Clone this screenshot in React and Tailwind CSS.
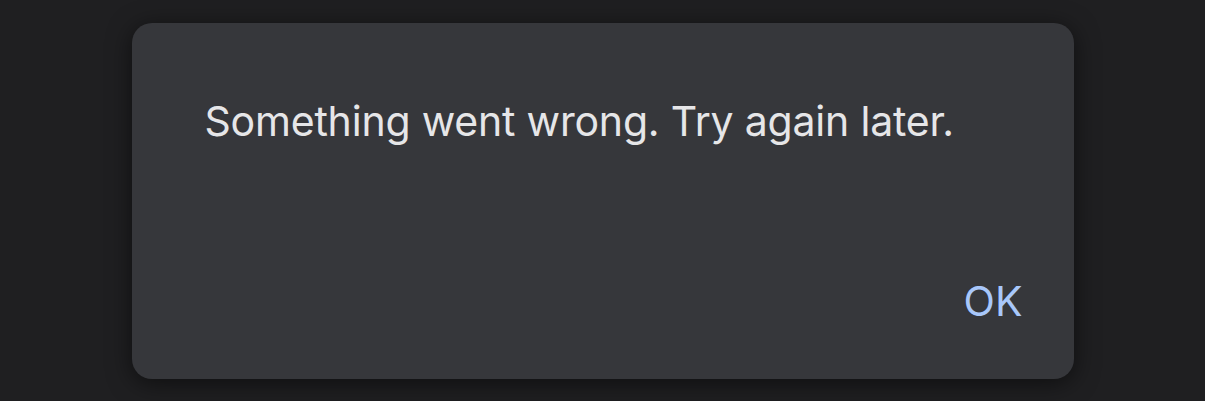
import React from "react";

export default function App() {
  return (
    <div className="w-[1205px] h-[401px] bg-[#1f1f21] pt-[23px] font-['Inter',sans-serif]">
      <div className="mx-auto w-[942px] h-[356px] rounded-[20px] bg-[#36373b] shadow-[0_4px_24px_rgba(0,0,0,0.55)] flex flex-col pl-[73px] pr-[51px] pt-[74px] pb-[54px]">
        <p className="text-[41px] leading-[48px] text-[#e6e6e8] tracking-[-0.2px]">
          Something went wrong. Try again later.
        </p>
        <div className="mt-auto flex justify-end">
          <button className="text-[41px] leading-[48px] text-[#a8c7fa]">OK</button>
        </div>
      </div>
    </div>
  );
}
